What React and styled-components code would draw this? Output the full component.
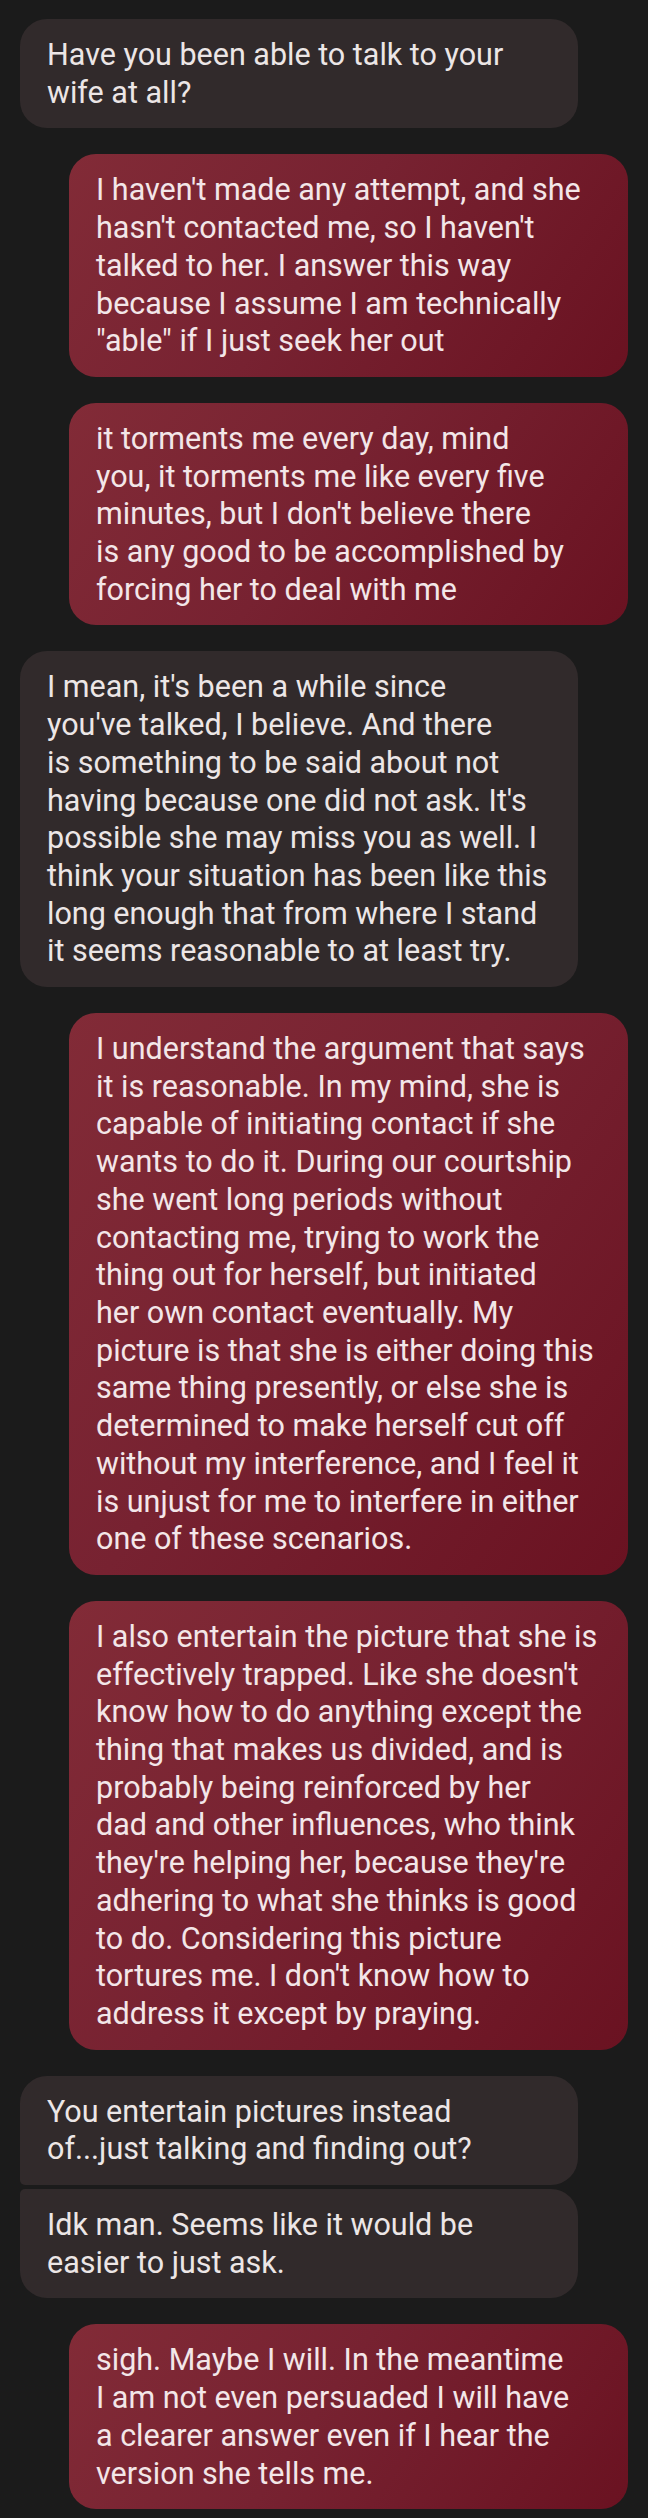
import React from 'react';
import styled, { createGlobalStyle, css } from 'styled-components';

const GlobalStyle = createGlobalStyle`
  html, body {
    margin: 0;
    padding: 0;
    background: #1b1b1b;
  }
`;

const Thread = styled.div`
  display: flex;
  flex-direction: column;
  padding: 19px 20px 11px 20px;
  font-family: Roboto, "Noto Sans", sans-serif;
`;

const Group = styled.div`
  display: flex;
  flex-direction: column;
  align-items: ${(p) => (p.$mine ? 'flex-end' : 'flex-start')};
  gap: 4px;
  margin-top: ${(p) => (p.$first ? 0 : 26)}px;
`;

const Bubble = styled.div`
  box-sizing: border-box;
  width: 559px;
  padding: 17px 27px;
  font-size: 30.5px;
  line-height: 37.7px;
  white-space: nowrap;
  border-radius: 27px;

  ${(p) =>
    p.$mine
      ? css`
          background: linear-gradient(125deg, #822b37 0%, #772231 45%, #6a1221 100%);
          color: #f3e6e8;
        `
      : css`
          width: 558px;
          background: #312a2b;
          color: #ece6e6;
        `}

  ${(p) =>
    p.$pos === 'top' &&
    css`
      border-bottom-left-radius: 5px;
    `}
  ${(p) =>
    p.$pos === 'bottom' &&
    css`
      border-top-left-radius: 5px;
    `}
`;

const messages = [
  { mine: false, lines: ['Have you been able to talk to your', 'wife at all?'] },
  {
    mine: true,
    lines: [
      "I haven't made any attempt, and she",
      "hasn't contacted me, so I haven't",
      'talked to her. I answer this way',
      'because I assume I am technically',
      '"able" if I just seek her out',
    ],
  },
  {
    mine: true,
    lines: [
      'it torments me every day, mind',
      'you, it torments me like every five',
      "minutes, but I don't believe there",
      'is any good to be accomplished by',
      'forcing her to deal with me',
    ],
  },
  {
    mine: false,
    lines: [
      "I mean, it's been a while since",
      "you've talked, I believe. And there",
      'is something to be said about not',
      "having because one did not ask. It's",
      'possible she may miss you as well. I',
      'think your situation has been like this',
      'long enough that from where I stand',
      'it seems reasonable to at least try.',
    ],
  },
  {
    mine: true,
    lines: [
      'I understand the argument that says',
      'it is reasonable. In my mind, she is',
      'capable of initiating contact if she',
      'wants to do it. During our courtship',
      'she went long periods without',
      'contacting me, trying to work the',
      'thing out for herself, but initiated',
      'her own contact eventually. My',
      'picture is that she is either doing this',
      'same thing presently, or else she is',
      'determined to make herself cut off',
      'without my interference, and I feel it',
      'is unjust for me to interfere in either',
      'one of these scenarios.',
    ],
  },
  {
    mine: true,
    lines: [
      'I also entertain the picture that she is',
      "effectively trapped. Like she doesn't",
      'know how to do anything except the',
      'thing that makes us divided, and is',
      'probably being reinforced by her',
      'dad and other influences, who think',
      "they're helping her, because they're",
      'adhering to what she thinks is good',
      'to do. Considering this picture',
      "tortures me. I don't know how to",
      'address it except by praying.',
    ],
  },
  {
    mine: false,
    group: [
      ['You entertain pictures instead', 'of...just talking and finding out?'],
      ['Idk man. Seems like it would be', 'easier to just ask.'],
    ],
  },
  {
    mine: true,
    lines: [
      'sigh. Maybe I will. In the meantime',
      'I am not even persuaded I will have',
      'a clearer answer even if I hear the',
      'version she tells me.',
    ],
  },
];

const Lines = ({ lines }) =>
  lines.map((line, i) => (
    <React.Fragment key={i}>
      {i > 0 && <br />}
      {line}
    </React.Fragment>
  ));

export default function App() {
  return (
    <>
      <GlobalStyle />
      <Thread>
        {messages.map((msg, i) => (
          <Group key={i} $first={i === 0} $mine={msg.mine}>
            {msg.group ? (
              msg.group.map((lines, j) => (
                <Bubble
                  key={j}
                  $mine={msg.mine}
                  $pos={j === 0 ? 'top' : j === msg.group.length - 1 ? 'bottom' : 'middle'}
                >
                  <Lines lines={lines} />
                </Bubble>
              ))
            ) : (
              <Bubble $mine={msg.mine}>
                <Lines lines={msg.lines} />
              </Bubble>
            )}
          </Group>
        ))}
      </Thread>
    </>
  );
}
